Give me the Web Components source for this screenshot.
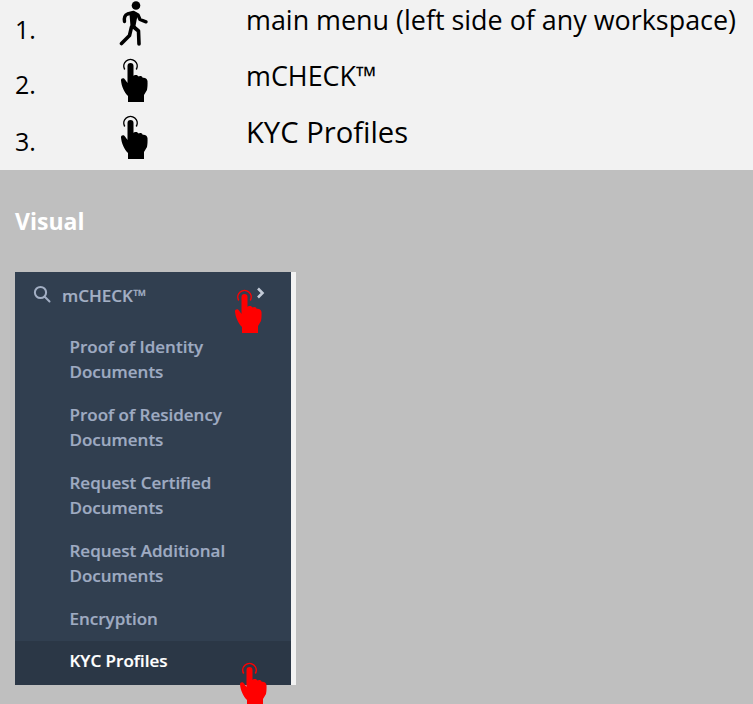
<!DOCTYPE html>
<html>
<head>
<meta charset="utf-8">
<style>
    html, body { margin: 0; padding: 0; }
    body { width: 753px; height: 704px; overflow: hidden; font-family: "Open Sans", sans-serif; background: #bfbfbf; }
</style>
</head>
<body>
<step-list>
    <step-row num="1." icon="walk" style="--text-top: 2px; --num-top: 11px">main menu (left side of any workspace)</step-row>
    <step-row num="2." icon="hand" style="--text-top: 1px; --num-top: 9px">mCHECK™</step-row>
    <step-row num="3." icon="hand" style="--text-top: 0px; --num-top: 9px" large>KYC Profiles</step-row>
</step-list>
<visual-section>
    <side-menu>
        <menu-item>Proof of Identity<br>Documents</menu-item>
        <menu-item>Proof of Residency<br>Documents</menu-item>
        <menu-item>Request Certified<br>Documents</menu-item>
        <menu-item>Request Additional<br>Documents</menu-item>
        <menu-item>Encryption</menu-item>
        <menu-item active>KYC Profiles<tap-hand color="#f00"></tap-hand></menu-item>
    </side-menu>
</visual-section>

<script>
const HAND = `
<svg viewBox="0 0 30 46" width="30" height="46" style="display:block;overflow:visible">
    <path d="M5.700 12.500a6.700 6.700 0 1 1 11.600 0" fill="none" stroke="currentColor" stroke-width="1.500"/>
    <path d="M8.500 9a3 3 0 0 1 6 0V19c.8-1.500 4.500-1.300 5 .6 1-1.100 3.800-.8 4.300 1.300 1.500-.6 4.200.4 4.700 3 .2 3.500 0 6.500-.5 9.100L25 38v7H9v-6C5 35 2.500 29 2 23.500c-.2-2.500 2.800-3.200 4-1l2.500 3.500Z" fill="currentColor"/>
</svg>`;

class TapHand extends HTMLElement {
    constructor() {
        super();
        this.attachShadow({mode: 'open'});
        this.shadowRoot.innerHTML = `<style>:host { display: block; width: 30px; height: 46px; color: ${this.getAttribute("color") || "#000"}; }</style>${HAND}`;
    }
}
customElements.define("tap-hand", TapHand);

class WalkIcon extends HTMLElement {
    constructor() {
        super();
        this.attachShadow({mode: 'open'});
        this.shadowRoot.innerHTML = `
<style>:host { display: block; width: 30px; height: 46px; }</style>
<svg viewBox="0 0 30 46" width="30" height="46" style="display:block">
    <circle cx="17" cy="5.500" r="4.300" fill="#000"/>
    <path d="M5.500 21.500c-.5-3.500.5-6.500 3-7.500l6-1.500 4.500 2.500 2 4.500 6 2.300" fill="none" stroke="#000" stroke-width="3.400" stroke-linecap="round" stroke-linejoin="round"/>
    <path d="M10.500 14l4-2.500 4.500 2-1.500 7-1 5.500 3 3-1 1.500-7-4Z" fill="#000"/>
    <path d="M12.500 27l-2 8.500-8 8" fill="none" stroke="#000" stroke-width="3.600" stroke-linecap="round" stroke-linejoin="round"/>
    <path d="M14 26.500l5.500 4.500 .5 13" fill="none" stroke="#000" stroke-width="3.600" stroke-linecap="round" stroke-linejoin="round"/>
</svg>`;
    }
}
customElements.define("walk-icon", WalkIcon);

const listTemplate = document.createElement("template");
listTemplate.innerHTML = `
<style>
    :host { display: block; height: 170px; background: #f2f2f2; }
</style>
<slot></slot>
`;
class StepList extends HTMLElement {
    constructor() {
        super();
        this.attachShadow({mode: 'open'});
        this.shadowRoot.append(listTemplate.content.cloneNode(true));
    }
}
customElements.define("step-list", StepList);

const rowTemplate = document.createElement("template");
rowTemplate.innerHTML = `
<style>
    :host { display: grid; grid-template-columns: 104px 127px 1fr; height: 57px; padding-left: 15px; color: #000; }
    #num { font-size: 25px; padding-top: var(--num-top); line-height: 36px; }
    #text { font-size: 26.900px; padding-top: var(--text-top); line-height: 36px; white-space: nowrap; }
    :host([large]) #text { font-size: 29.200px; }
</style>
<span id="num"></span>
<div id="icon"></div>
<div id="text"><slot></slot></div>
`;
class StepRow extends HTMLElement {
    constructor() {
        super();
        this.attachShadow({mode: 'open'});
        this.shadowRoot.append(rowTemplate.content.cloneNode(true));
    }
    connectedCallback() {
        this.shadowRoot.querySelector("#num").textContent = this.getAttribute("num");
        const tag = this.getAttribute("icon") === "walk" ? "walk-icon" : "tap-hand";
        this.shadowRoot.querySelector("#icon").append(document.createElement(tag));
    }
}
customElements.define("step-row", StepRow);

const visualTemplate = document.createElement("template");
visualTemplate.innerHTML = `
<style>
    :host { display: block; padding: 34px 15px 0; }
    h2 { margin: 0 0 34px; font: 700 23px/34px "Open Sans", sans-serif; color: #fff; }
</style>
<h2>Visual</h2>
<slot></slot>
`;
class VisualSection extends HTMLElement {
    constructor() {
        super();
        this.attachShadow({mode: 'open'});
        this.shadowRoot.append(visualTemplate.content.cloneNode(true));
    }
}
customElements.define("visual-section", VisualSection);

const menuTemplate = document.createElement("template");
menuTemplate.innerHTML = `
<style>
    :host { display: block; width: 276px; height: 413px; background: #313f50; border-right: 5px solid #f2f2f2; position: relative; }
    header { display: flex; align-items: center; height: 47px; padding-left: 18px; color: #a3afc4; font-size: 17px; font-weight: 600; -webkit-text-stroke: .2px; box-sizing: border-box; }
    header svg { display: block; margin-right: 11px; margin-top: -4px; }
    #chev { position: absolute; left: 241px; top: 15px; }
    #tap { position: absolute; left: 218px; top: 16px; z-index: 1; }
</style>
<header>
    <svg width="18" height="18" viewBox="0 0 18 18"><circle cx="7.500" cy="7.500" r="5.600" fill="none" stroke="#a3afc4" stroke-width="2"/><path d="M11.500 11.500l5 5" stroke="#a3afc4" stroke-width="2" stroke-linecap="round"/></svg>
    <span>mCHECK™</span>
</header>
<svg id="chev" width="9" height="12" viewBox="0 0 9 12"><path d="M2 1.500l4.500 4.500-4.500 4.500" fill="none" stroke="#c3cbd8" stroke-width="2.600"/></svg>
<tap-hand id="tap" color="#f00"></tap-hand>
<slot></slot>
`;
class SideMenu extends HTMLElement {
    constructor() {
        super();
        this.attachShadow({mode: 'open'});
        this.shadowRoot.append(menuTemplate.content.cloneNode(true));
    }
}
customElements.define("side-menu", SideMenu);

const itemTemplate = document.createElement("template");
itemTemplate.innerHTML = `
<style>
    :host { display: block; position: relative; padding: 16px 0 3px 54.500px; color: #9fabc2; font-size: 17px; font-weight: 600; -webkit-text-stroke: .2px; line-height: 24.500px; }
    :host([active]) { background: #2b3746; color: #fff; height: 44px; box-sizing: border-box; padding-top: 8px; padding-bottom: 0; margin-top: 6.500px; }
    ::slotted(tap-hand) { position: absolute; left: 223px; top: 20px; }
</style>
<slot></slot>
`;
class MenuItem extends HTMLElement {
    constructor() {
        super();
        this.attachShadow({mode: 'open'});
        this.shadowRoot.append(itemTemplate.content.cloneNode(true));
    }
}
customElements.define("menu-item", MenuItem);
</script>
</body>
</html>
